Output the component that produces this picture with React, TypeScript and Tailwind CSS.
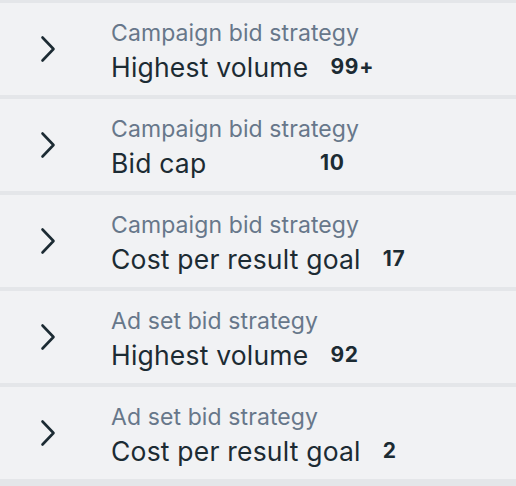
import React from "react";

const rows = [
  { label: "Campaign bid strategy", title: "Highest volume", count: "99+" },
  { label: "Campaign bid strategy", title: "Bid cap", count: "10" },
  { label: "Campaign bid strategy", title: "Cost per result goal", count: "17" },
  { label: "Ad set bid strategy", title: "Highest volume", count: "92" },
  { label: "Ad set bid strategy", title: "Cost per result goal", count: "2" },
];

function Chevron() {
  return (
    <svg width="16" height="28" viewBox="0 0 16 28" fill="none">
      <path d="M2.5 2.5 L13.5 14 L2.5 25.5" stroke="#1c2b33" strokeWidth="2.6" strokeLinecap="round" strokeLinejoin="round" />
    </svg>
  );
}

export default function App() {
  return (
    <div
      className="w-[516px] h-[486px] bg-[#e4e6e9] pt-[3px] flex flex-col gap-[4px] overflow-hidden"
      style={{ fontFamily: "Inter, 'Noto Sans', sans-serif" }}
    >
      {rows.map((r, i) => (
        <div key={i} className="h-[92px] shrink-0 bg-[#f1f2f4] flex items-center">
          <div className="w-[111px] flex justify-start pl-[40px]">
            <Chevron />
          </div>
          <div className="flex flex-col pt-[3px]">
            <div className="text-[23px] leading-[28px] text-[#67778a] tracking-[0.1px]">{r.label}</div>
            <div className="flex items-center mt-[4px]">
              <span className="text-[26.5px] leading-[32px] text-[#1c2b33] min-w-[187px] tracking-[0.2px]">{r.title}</span>
              <span className="ml-[22px] text-[21px] font-bold text-[#1c2b33] leading-[24px] tracking-[0.8px]">{r.count}</span>
            </div>
          </div>
        </div>
      ))}
    </div>
  );
}
